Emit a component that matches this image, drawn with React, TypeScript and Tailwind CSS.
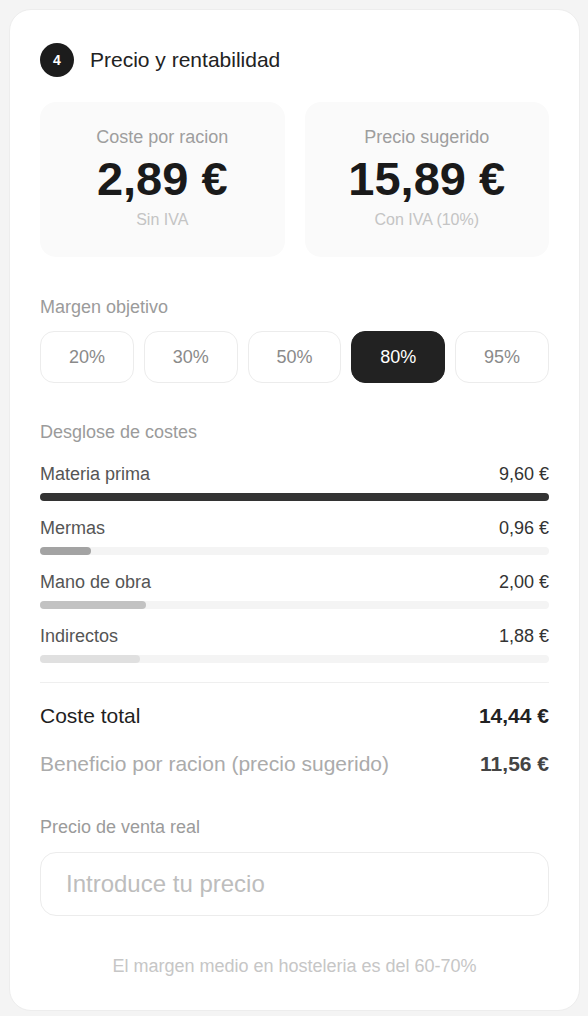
import React from "react";

const rows = [
  { label: "Materia prima", value: 9.6, text: "9,60 €", color: "bg-[#333333]" },
  { label: "Mermas", value: 0.96, text: "0,96 €", color: "bg-[#a3a3a3]" },
  { label: "Mano de obra", value: 2.0, text: "2,00 €", color: "bg-[#c2c2c2]" },
  { label: "Indirectos", value: 1.88, text: "1,88 €", color: "bg-[#e0e0e0]" },
];

const margins = ["20%", "30%", "50%", "80%", "95%"];

export default function App() {
  const max = Math.max(...rows.map((r) => r.value));
  return (
    <div
      className="min-h-[1016px] w-[588px] bg-[#f4f4f4] pt-[9px]"
      style={{ fontFamily: '"Liberation Sans", Arial, sans-serif' }}
    >
      <div className="ml-[9px] w-[571px] rounded-[22px] border border-[#ededed] bg-white px-[30px] pb-[32px] pt-[33px]">
        {/* Header */}
        <div className="flex h-[34px] items-center">
          <div className="flex h-[34px] w-[34px] items-center justify-center rounded-full bg-[#1c1c1c] text-[14px] font-bold text-white">
            4
          </div>
          <div className="ml-[16px] text-[21px] leading-[34px] text-[#222222]">
            Precio y rentabilidad
          </div>
        </div>

        {/* Stats */}
        <div className="mt-[25px] grid grid-cols-2 gap-[20px]">
          <div className="flex h-[155px] flex-col items-center rounded-[16px] bg-[#fafafa] pt-[23px]">
            <div className="text-[18px] leading-[24px] text-[#9e9e9e]">Coste por racion</div>
            <div className="mt-[5px] text-[47px] font-bold leading-[50px] text-[#1a1a1a]">2,89 €</div>
            <div className="mt-[6px] text-[16px] leading-[20px] text-[#c4c4c4]">Sin IVA</div>
          </div>
          <div className="flex h-[155px] flex-col items-center rounded-[16px] bg-[#fafafa] pt-[23px]">
            <div className="text-[18px] leading-[24px] text-[#9e9e9e]">Precio sugerido</div>
            <div className="mt-[5px] text-[47px] font-bold leading-[50px] text-[#1a1a1a]">15,89 €</div>
            <div className="mt-[6px] text-[16px] leading-[20px] text-[#c4c4c4]">Con IVA (10%)</div>
          </div>
        </div>

        {/* Margen objetivo */}
        <div className="mt-[38px] text-[18px] leading-[24px] text-[#9b9b9b]">Margen objetivo</div>
        <div className="mt-[12px] grid grid-cols-5 gap-[10px]">
          {margins.map((m) => {
            const active = m === "80%";
            return (
              <div
                key={m}
                className={
                  active
                    ? "flex h-[52px] items-center justify-center rounded-[14px] border border-[#222222] bg-[#222222] text-[18px] text-white"
                    : "flex h-[52px] items-center justify-center rounded-[14px] border border-[#ececec] bg-white text-[18px] text-[#8a8a8a]"
                }
              >
                {m}
              </div>
            );
          })}
        </div>

        {/* Desglose */}
        <div className="mt-[37px] text-[18px] leading-[24px] text-[#9b9b9b]">Desglose de costes</div>
        <div className="mt-[18px] flex flex-col gap-[15px]">
          {rows.map((r) => (
            <div key={r.label}>
              <div className="flex items-center justify-between text-[18px] leading-[24px]">
                <span className="text-[#555555]">{r.label}</span>
                <span className="text-[#333333]">{r.text}</span>
              </div>
              <div className="mt-[7px] h-[8px] w-full rounded-full bg-[#f4f4f4]">
                <div
                  className={"h-[8px] rounded-full " + r.color}
                  style={{ width: `${(r.value / max) * 100}%` }}
                />
              </div>
            </div>
          ))}
        </div>

        <div className="mt-[19px] h-px bg-[#efefef]" />

        {/* Totals */}
        <div className="mt-[19px] flex items-center justify-between text-[21px] leading-[28px]">
          <span className="text-[#1f1f1f]">Coste total</span>
          <span className="font-bold text-[#222222]">14,44 €</span>
        </div>
        <div className="mt-[20px] flex items-center justify-between text-[21px] leading-[28px]">
          <span className="text-[#ababab]">Beneficio por racion (precio sugerido)</span>
          <span className="font-bold text-[#444444]">11,56 €</span>
        </div>

        {/* Precio de venta real */}
        <div className="mt-[37px] text-[18px] leading-[24px] text-[#9b9b9b]">Precio de venta real</div>
        <input
          type="text"
          placeholder="Introduce tu precio"
          className="mt-[13px] h-[64px] w-full rounded-[16px] border border-[#ececec] bg-white px-[25px] text-[24px] text-[#333333] outline-none placeholder:text-[#bdbdbd]"
          style={{ fontFamily: '"Liberation Sans", Arial, sans-serif' }}
        />

        <div className="mt-[38px] text-center text-[18px] leading-[24px] text-[#c6c6c6]">
          El margen medio en hosteleria es del 60-70%
        </div>
      </div>
    </div>
  );
}
